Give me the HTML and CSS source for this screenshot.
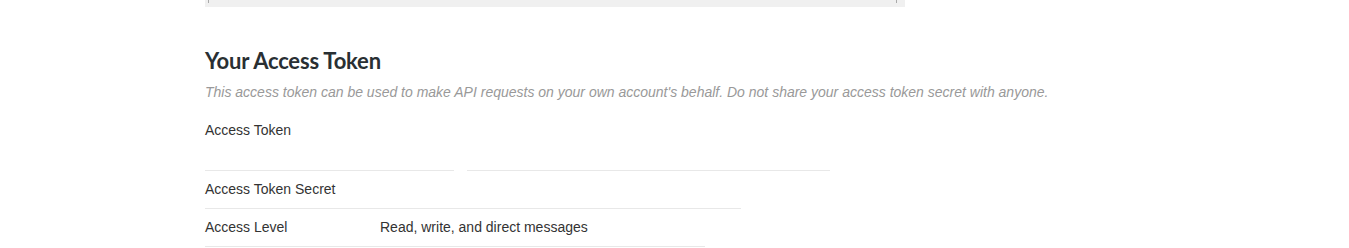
FILE: index.html
```html
<!DOCTYPE html>
<html>
<head>
    <title>Your Access Token</title>
    <link rel="stylesheet" href="styles.css">
</head>
<body>
    <div class="page">
        <div class="code-box">
            <span class="mark"></span>
            <span class="mark"></span>
        </div>

        <h2>Your Access Token</h2>
        <p class="note">This access token can be used to make API requests on your own account's behalf. Do not share your access token secret with anyone.</p>

        <div class="details">
            <div class="row row-token">
                <span class="label">Access Token</span>
                <span class="value"></span>
                <span class="gap"></span>
            </div>
            <div class="row row-secret">
                <span class="label">Access Token Secret</span>
                <span class="value"></span>
            </div>
            <div class="row row-level">
                <span class="label">Access Level</span>
                <span class="value">Read, write, and direct messages</span>
            </div>
        </div>
    </div>
</body>
</html>
```

FILE: styles.css
```css
body, h2, p {
    margin: 0;
    padding: 0;
}

body {
    background-color: #fff;
    font-family: "Liberation Sans", Arial, sans-serif;
    font-size: 14px;
    color: #333;
}

.page {
    margin-left: 205px;
    width: 1000px;
}

.code-box {
    width: 689px;
    height: 7px;
    background-color: #f0f0f0;
    display: flex;
    justify-content: space-between;
    align-items: flex-start;
    padding: 0 8px 0 3px;
}

.mark {
    width: 1px;
    height: 3px;
    background-color: #aaa;
}

h2 {
    margin-top: 40px;
    font-family: Lato, sans-serif;
    font-weight: bold;
    font-size: 22px;
    letter-spacing: -0.2px;
    line-height: 28px;
    color: #292f33;
}

.note {
    margin-top: 7px;
    font-style: italic;
    color: #999;
    line-height: 20px;
}

.details {
    margin-top: 18px;
}

.row {
    display: flex;
    position: relative;
    border-bottom: 1px solid #e8e8e8;
    line-height: 18px;
    padding: 9px 0 10px;
}

.row-token {
    width: 625px;
    height: 40px;
    padding-top: 1px;
    padding-bottom: 9px;
}

.row-secret {
    width: 536px;
}

.row-level {
    width: 500px;
}

.label {
    width: 175px;
    flex-shrink: 0;
}

.gap {
    position: absolute;
    left: 249px;
    bottom: -1px;
    width: 13px;
    height: 1px;
    background-color: #fff;
}
```
